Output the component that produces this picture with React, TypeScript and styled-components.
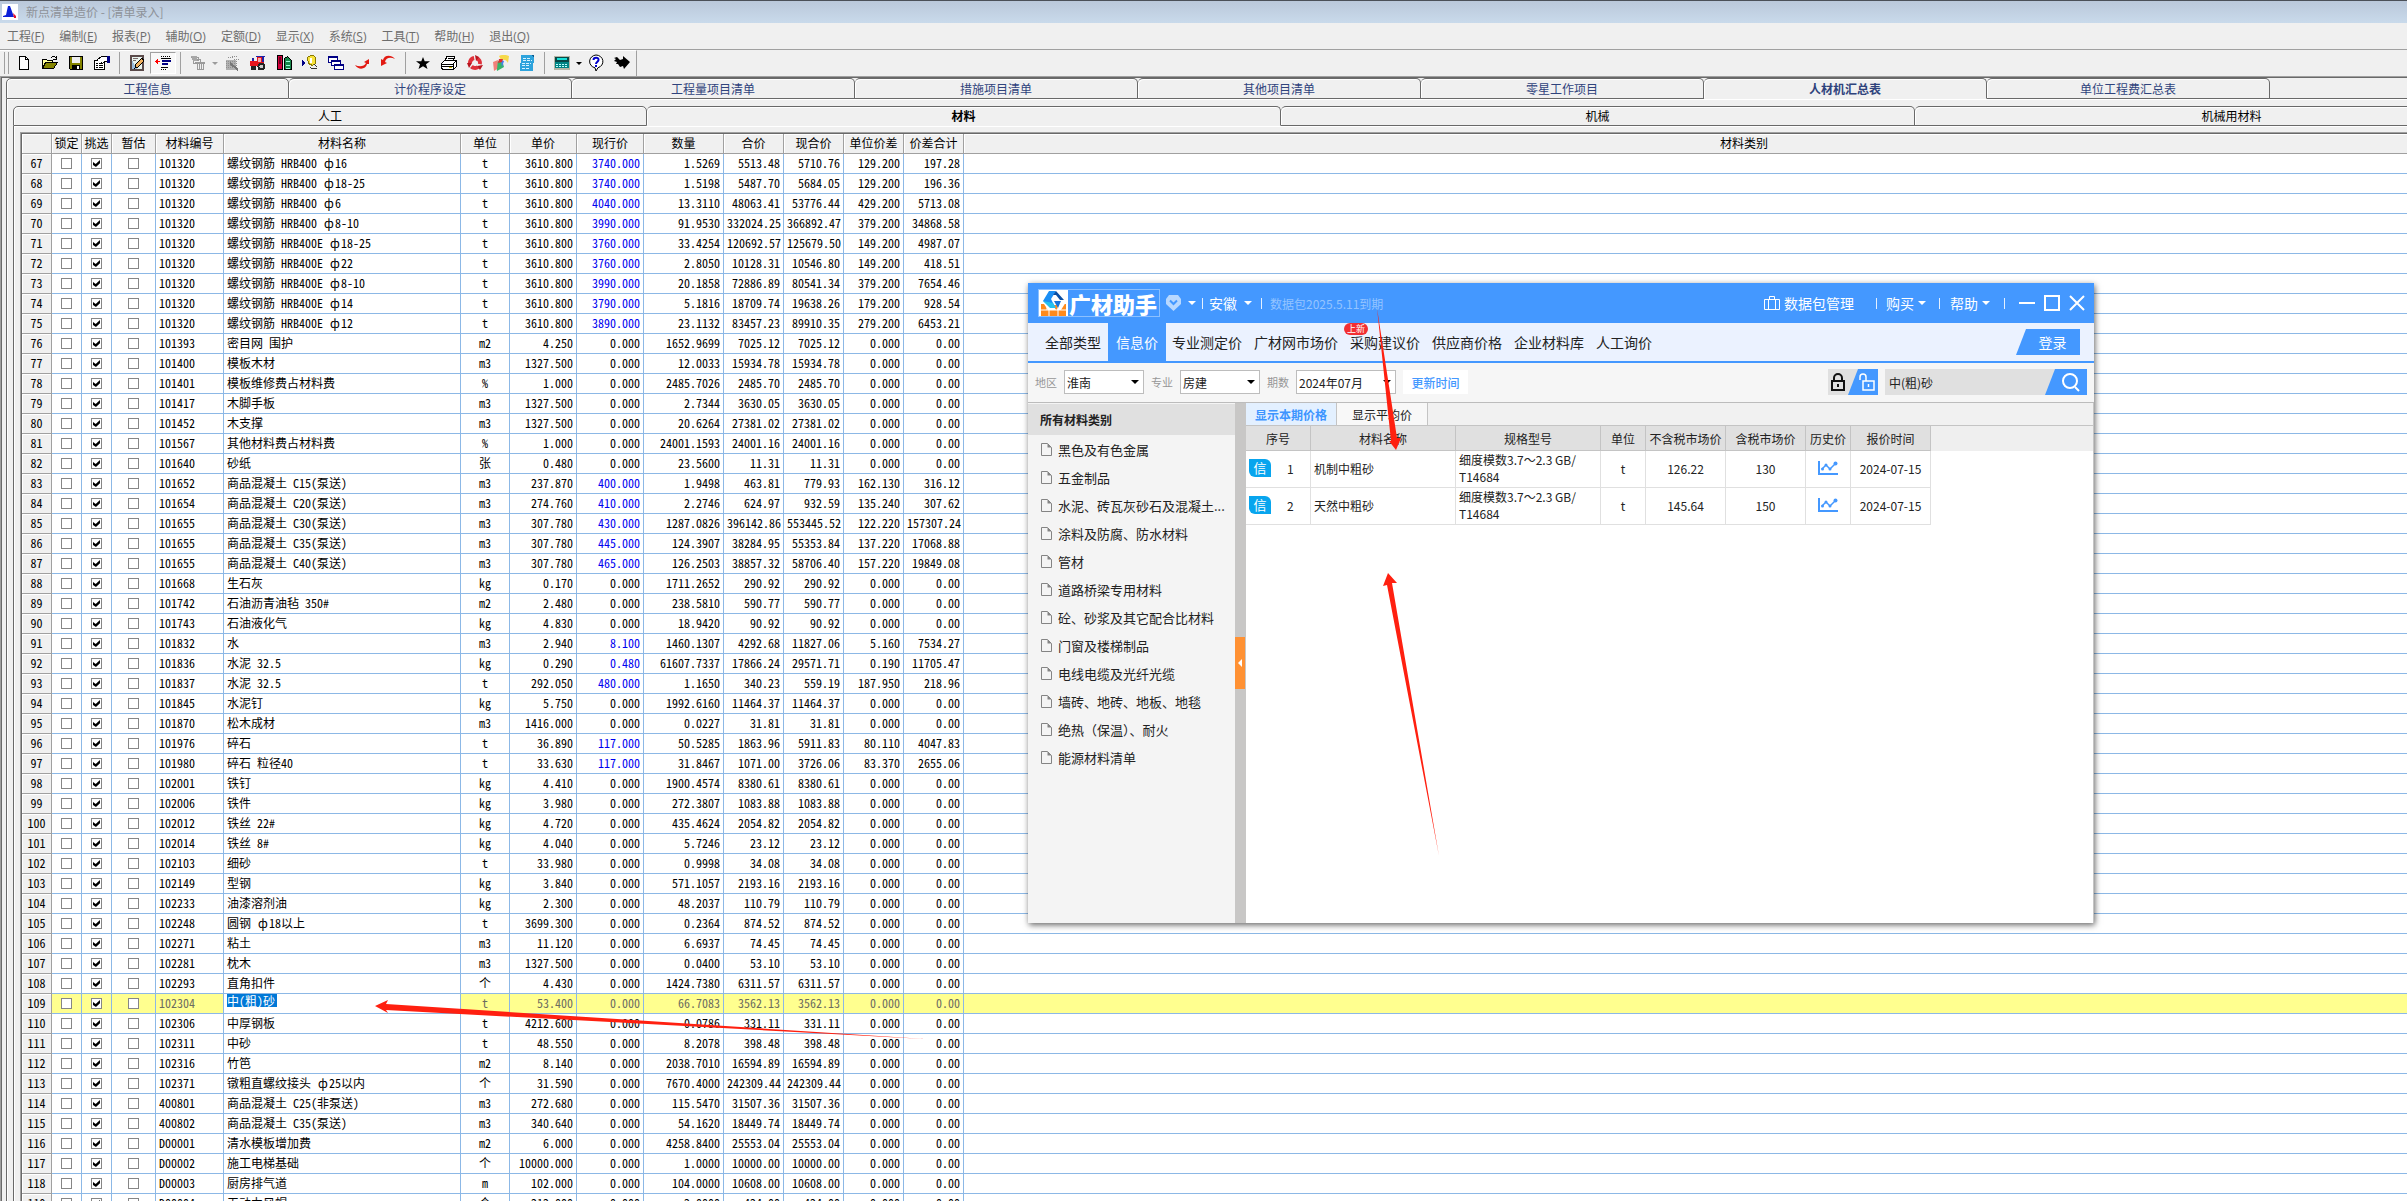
import React from 'react';
import styled, { createGlobalStyle, css } from 'styled-components';

const SONG = `"Noto Sans CJK SC", "Noto Sans", sans-serif`;
const UI = `"Noto Sans CJK SC", "Open Sans", sans-serif`;
const BLUE = '#4498ff';

const Global = createGlobalStyle`
  *, *::before, *::after { box-sizing: border-box; }
  body { margin: 0; background: #f0f0f0; font-family: ${SONG}; font-size: 12px; color: #000; }
  button, input, select { font: inherit; color: inherit; margin: 0; padding: 0; border: 0; border-radius: 0; background: none; outline: none; }
`;

/* ---------- main window ---------- */

const Screen = styled.div`
  position: relative;
  display: flex;
  flex-direction: column;
  width: 100%;
  height: 100vh;
  overflow: hidden;
  background: #f0f0f0;
`;

const TitleBar = styled.header`
  flex: none;
  display: flex;
  align-items: center;
  gap: 8px;
  height: 23px;
  padding-left: 2px;
  border-top: 1px solid #4b5058;
  background: linear-gradient(#bac8da, #c9daeb);
  color: #8e9299;
  line-height: 20px;
`;

const MenuBar = styled.nav`
  flex: none;
  display: flex;
  gap: 15px;
  height: 27px;
  padding: 0 7px;
  border-bottom: 1px solid #a0a0a0;
  button { color: #6d6d6d; padding-top: 2px; line-height: 24px; font-family: "Open Sans", "Noto Sans CJK SC", sans-serif; }
`;

const ToolBar = styled.div`
  flex: none;
  align-self: flex-start;
  display: flex;
  align-items: center;
  height: 26px;
  padding: 0 1px 1px 4px;
  border-right: 1px solid #a0a0a0;
  border-top: 1px solid #fff;
`;

const Grip = styled.span`
  width: 5px;
  height: 22px;
  margin-right: 2px;
  border: solid #a0a0a0;
  border-width: 0 1px;
`;

const ToolButton = styled.button<{ $pressed?: boolean }>`
  display: flex;
  align-items: center;
  justify-content: center;
  width: 26px;
  height: 22px;
  svg { flex: none; }
  ${(p) => p.$pressed && css`
    background: #f8f8f8;
    border: 1px solid;
    border-color: #a0a0a0 #fff #fff #a0a0a0;
  `}
`;

const ToolSep = styled.span`
  width: 1px;
  height: 22px;
  margin: 0 4px;
  background: #a0a0a0;
`;

const Caret = styled.span<{ $color?: string; $w?: number }>`
  flex: none;
  width: 0;
  height: 0;
  border: ${(p) => p.$w ?? 3}px solid transparent;
  border-bottom-width: 0;
  border-top-color: ${(p) => p.$color ?? '#000'};
`;

const ToolCaret = styled.button`
  display: flex;
  align-items: center;
  justify-content: center;
  width: 8px;
  height: 22px;
`;

const Workspace = styled.main`
  flex: 1;
  min-height: 0;
  padding: 1px 0 0 5px;
  border: solid #a0a0a0;
  border-width: 1px 0 0 1px;
  box-shadow: inset 1px 1px 0 #696969;
  overflow: hidden;
`;

const TabStrip = styled.div`
  display: flex;
  height: 21px;
`;

const Tab = styled.button<{ $active?: boolean; $main?: boolean }>`
  flex: none;
  width: ${(p) => (p.$main ? 283 : 634)}px;
  height: ${(p) => (p.$main ? 21 : 20)}px;
  border: 1px solid #696969;
  border-width: 1px 1px 1px 0;
  border-radius: 5px 5px 0 0;
  background: #f0f0f0;
  box-shadow: inset 1px 1px 0 #fff;
  line-height: 18px;
  color: ${(p) => (p.$main ? '#2f437c' : '#000')};
  &:first-child { border-left-width: 1px; }
  ${(p) => p.$active && css`
    font-weight: 700;
    border-bottom-color: #f0f0f0;
  `}
`;

const TabFill = styled.span<{ $main?: boolean }>`
  flex: 1;
  height: ${(p) => (p.$main ? 21 : 20)}px;
  border-bottom: 1px solid #696969;
`;

const Page = styled.section`
  width: max-content;
  min-width: 100%;
  padding: 7px 0 0 6px;
  border-left: 1px solid #696969;
  box-shadow: inset 1px 1px 0 #fff;
`;

const SubPage = styled(Page)`
  padding-top: 6px;
`;

const GridFrame = styled.div`
  border: solid #a0a0a0;
  border-width: 1px 0 0 1px;
`;

const GridInner = styled.div`
  border: solid #696969;
  border-width: 1px 0 0 1px;
`;

const SubStrip = styled(TabStrip)`
  height: 20px;
`;

const Grid = styled.table`
  table-layout: fixed;
  width: 2503px;
  border-collapse: separate;
  border-spacing: 0;
  background: #fff;
  font-feature-settings: "hwid";
  th, td {
    height: 20px;
    padding: 0;
    border: solid #8cb8e6;
    border-width: 0 1px 1px 0;
    font-weight: 400;
    line-height: 17px;
    vertical-align: top;
    white-space: nowrap;
    overflow: hidden;
  }
  th {
    background: #f0f0f0;
    border-color: #a0a0a0;
    box-shadow: inset 1px 1px 0 #fff;
    text-align: center;
  }
`;

const Row = styled.tr<{ $current?: boolean }>`
  ${(p) => p.$current && css`
    td { background: #ffff8f; color: #6c6c60; }
  `}
`;

const Cell = styled.td<{ $kind?: 'num' | 'mid' | 'text'; $blue?: boolean; $editing?: boolean }>`
  && {
    text-align: ${(p) => (p.$kind === 'num' ? 'right' : p.$kind === 'mid' ? 'center' : 'left')};
    padding: 0 3px;
    ${(p) => p.$blue && 'color: #0000f0;'}
    ${(p) => p.$editing && 'background: #fff;'}
  }
`;

const WideGlyph = styled.span`
  display: inline-block;
  width: 12px;
  text-align: center;
`;

const Editor = styled.input`
  display: block;
  width: 50px;
  height: 13px;
  background: #0078d7;
  color: #fff;
  line-height: 13px;
`;

const Check = styled.input`
  appearance: none;
  display: block;
  width: 11px;
  height: 11px;
  margin: 4px auto 0;
  border: 1px solid #868686;
  background: #fff;
  &:checked::after {
    content: '';
    display: block;
    width: 7px;
    height: 7px;
    margin: 1px;
    background: #000;
    clip-path: polygon(0 30%, 38% 58%, 100% 0, 100% 45%, 42% 100%, 0 72%);
  }
`;

/* ---------- price helper window ---------- */

const Helper = styled.section`
  position: absolute;
  left: 1028px;
  top: 283px;
  display: flex;
  flex-direction: column;
  width: 1066px;
  height: 640px;
  background: #fff;
  color: #222;
  font-family: ${UI};
  box-shadow: 1px 2px 6px rgba(0, 0, 0, 0.6);
`;

const HelperTitle = styled.header`
  display: flex;
  align-items: center;
  height: 40px;
  padding: 0 9px 0 10px;
  background: ${BLUE};
  color: #fff;
  font-size: 14px;
`;

const Brand = styled.div`
  display: flex;
  align-items: center;
  width: 122px;
  height: 28px;
  border: 1px solid #8cc0ff;
  font-size: 22px;
  font-weight: 900;
  line-height: 26px;
  white-space: nowrap;
  overflow: hidden;
  svg { flex: none; margin-right: 1px; }
`;

const TitleItem = styled.button<{ $gap?: number; $tight?: boolean }>`
  display: flex;
  align-items: center;
  gap: ${(p) => (p.$tight ? 4 : 7)}px;
  margin-left: ${(p) => p.$gap ?? 6}px;
  line-height: 20px;
  white-space: nowrap;
`;

const TitleSep = styled.span<{ $gap?: number }>`
  width: 1px;
  height: 11px;
  margin-left: ${(p) => p.$gap ?? 8}px;
  background: #e4f0ff;
`;

const Expiry = styled.span`
  margin-left: 8px;
  font-size: 12px;
  color: #94c4ff;
`;

const Push = styled.span`
  flex: 1;
`;

const HelperNav = styled.nav`
  display: flex;
  height: 40px;
  padding: 0 14px 0 11px;
  background: #ebf2ff;
  border-bottom: 2px solid ${BLUE};
  font-size: 14px;
`;

const NavTab = styled.button<{ $active?: boolean }>`
  position: relative;
  height: 38px;
  padding: 0 6px;
  line-height: 36px;
  &:first-child { padding-right: 7px; }
  ${(p) => p.$active && css`
    background: ${BLUE};
    color: #fff;
    padding: 0 8px;
  `}
`;

const Badge = styled.span`
  position: absolute;
  left: 0;
  top: 0;
  width: 24px;
  height: 12px;
  border-radius: 6px;
  background: #f22f33;
  color: #fff;
  font-size: 9px;
  line-height: 12px;
  text-align: center;
`;

const Login = styled.button`
  width: 64px;
  height: 26px;
  margin-top: 6px;
  padding-left: 9px;
  background: ${BLUE};
  color: #fff;
  clip-path: polygon(10px 0, 100% 0, 100% 100%, 0 100%);
`;

const FilterBar = styled.div`
  display: flex;
  align-items: center;
  gap: 7px;
  height: 40px;
  padding: 0 7px 1px;
  background: #f6f6f6;
  border-bottom: 1px solid #bcbcbc;
  label { font-size: 11px; color: #979797; }
`;

const SelectBox = styled.span<{ $w: number }>`
  display: flex;
  align-items: center;
  width: ${(p) => p.$w}px;
  height: 24px;
  padding-right: 4px;
  border: 1px solid #bdbdbd;
  background: #fff;
  select { flex: 1; min-width: 0; height: 22px; padding-left: 2px; appearance: none; }
`;

const Refresh = styled.button`
  width: 65px;
  height: 24px;
  background: #fff;
  color: ${BLUE};
  font-weight: 500;
`;

const LockSwitch = styled.div`
  display: flex;
  width: 50px;
  height: 26px;
  background: #e0e0e0;
  button { display: flex; align-items: center; justify-content: center; width: 20px; }
  button + button { width: 30px; padding-left: 8px; background: ${BLUE}; clip-path: polygon(10px 0, 100% 0, 100% 100%, 0 100%); }
`;

const Search = styled.form`
  display: flex;
  width: 202px;
  height: 26px;
  background: #e0e0e0;
  input { flex: 1; min-width: 0; padding: 0 4px; }
  button { display: flex; align-items: center; justify-content: center; width: 42px; padding-left: 10px; background: ${BLUE}; clip-path: polygon(10px 0, 100% 0, 100% 100%, 0 100%); }
`;

const HelperBody = styled.div`
  flex: 1;
  display: flex;
  min-height: 0;
`;

const Side = styled.aside`
  width: 207px;
  background: #f4f4f4;
  h2 { margin: 1px 0 0; padding-left: 12px; background: #e0e0e0; font-size: 12px; line-height: 31px; }
  ul { margin: 0; padding: 0; list-style: none; }
`;

const Category = styled.button`
  display: flex;
  align-items: center;
  gap: 6px;
  height: 28px;
  padding-left: 13px;
  font-size: 13px;
  white-space: nowrap;
`;

const Divider = styled.div`
  display: flex;
  align-items: center;
  width: 11px;
  background: #c8c7c6;
  button { display: flex; align-items: center; justify-content: center; width: 10px; height: 52px; background: #ff9133; }
`;

const Results = styled.div`
  flex: 1;
  min-width: 0;
  border-right: 1px solid #c4c4c4;
`;

const ResultTabs = styled.div`
  display: flex;
  height: 22px;
  background: #f1f1f1;
`;

const ResultTab = styled.button<{ $active?: boolean }>`
  width: 91px;
  padding-top: 1px;
  border-right: 1px solid #c4c4c4;
  background: ${(p) => (p.$active ? '#e3f0ff' : '#f8f8f8')};
  color: ${(p) => (p.$active ? '#3d95ff' : '#222')};
  font-weight: ${(p) => (p.$active ? 700 : 400)};
  line-height: 21px;
`;

const ResultWrap = styled.div`
  border-top: 1px solid #c4c4c4;
  background: linear-gradient(#efefef 25px, #fff 25px);
`;

const ResultTable = styled.table`
  table-layout: fixed;
  width: 685px;
  border-collapse: separate;
  border-spacing: 0;
  th { height: 25px; padding: 0; border: solid #c4c4c4; border-width: 0 1px 1px 0; background: #e0e0e0; font-weight: 400; line-height: 17px; white-space: nowrap; }
  td { height: 37px; padding: 0 3px 2px; border: solid #e0e0e0; border-width: 0 1px 1px 0; background: #fff; text-align: center; line-height: 17px; }
  td:nth-child(2), td:nth-child(3) { text-align: left; }
`;

const NumberCell = styled.div`
  display: flex;
  align-items: center;
  gap: 16px;
`;

const Tag = styled.span`
  width: 22px;
  height: 18px;
  border-radius: 0 6px 0 6px;
  background: #08a5ee;
  color: #fff;
  line-height: 18px;
  font-size: 13px;
`;

const HistoryLink = styled.button`
  display: block;
  margin: 0 auto;
  height: 16px;
`;

const Arrows = styled.svg`
  position: absolute;
  left: 0;
  top: 0;
  pointer-events: none;
`;

/* ---------- data ---------- */

const MENUS: [string, string][] = [
  ['工程', 'F'], ['编制', 'E'], ['报表', 'P'], ['辅助', 'O'], ['定额', 'D'],
  ['显示', 'X'], ['系统', 'S'], ['工具', 'T'], ['帮助', 'H'], ['退出', 'Q'],
];
const MAIN_TABS = ['工程信息', '计价程序设定', '工程量项目清单', '措施项目清单', '其他项目清单', '零星工作项目', '人材机汇总表', '单位工程费汇总表'];
const SUB_TABS = ['人工', '材料', '机械', '机械用材料'];
const COLUMNS: [string, number][] = [
  ['', 30], ['锁定', 30], ['挑选', 30], ['暂估', 44], ['材料编号', 68], ['材料名称', 237], ['单位', 49], ['单价', 67],
  ['现行价', 67], ['数量', 80], ['合价', 60], ['现合价', 60], ['单位价差', 60], ['价差合计', 60], ['材料类别', 1561],
];

const MATERIALS = `101320|螺纹钢筋 HRB400 ф16|t|3610.800|3740.000|1.5269|5513.48|5710.76|129.200|197.28
101320|螺纹钢筋 HRB400 ф18-25|t|3610.800|3740.000|1.5198|5487.70|5684.05|129.200|196.36
101320|螺纹钢筋 HRB400 ф6|t|3610.800|4040.000|13.3110|48063.41|53776.44|429.200|5713.08
101320|螺纹钢筋 HRB400 ф8-10|t|3610.800|3990.000|91.9530|332024.25|366892.47|379.200|34868.58
101320|螺纹钢筋 HRB400E ф18-25|t|3610.800|3760.000|33.4254|120692.57|125679.50|149.200|4987.07
101320|螺纹钢筋 HRB400E ф22|t|3610.800|3760.000|2.8050|10128.31|10546.80|149.200|418.51
101320|螺纹钢筋 HRB400E ф8-10|t|3610.800|3990.000|20.1858|72886.89|80541.34|379.200|7654.46
101320|螺纹钢筋 HRB400E ф14|t|3610.800|3790.000|5.1816|18709.74|19638.26|179.200|928.54
101320|螺纹钢筋 HRB400E ф12|t|3610.800|3890.000|23.1132|83457.23|89910.35|279.200|6453.21
101393|密目网 围护|m2|4.250|0.000|1652.9699|7025.12|7025.12|0.000|0.00
101400|模板木材|m3|1327.500|0.000|12.0033|15934.78|15934.78|0.000|0.00
101401|模板维修费占材料费|%|1.000|0.000|2485.7026|2485.70|2485.70|0.000|0.00
101417|木脚手板|m3|1327.500|0.000|2.7344|3630.05|3630.05|0.000|0.00
101452|木支撑|m3|1327.500|0.000|20.6264|27381.02|27381.02|0.000|0.00
101567|其他材料费占材料费|%|1.000|0.000|24001.1593|24001.16|24001.16|0.000|0.00
101640|砂纸|张|0.480|0.000|23.5600|11.31|11.31|0.000|0.00
101652|商品混凝土 C15(泵送)|m3|237.870|400.000|1.9498|463.81|779.93|162.130|316.12
101654|商品混凝土 C20(泵送)|m3|274.760|410.000|2.2746|624.97|932.59|135.240|307.62
101655|商品混凝土 C30(泵送)|m3|307.780|430.000|1287.0826|396142.86|553445.52|122.220|157307.24
101655|商品混凝土 C35(泵送)|m3|307.780|445.000|124.3907|38284.95|55353.84|137.220|17068.88
101655|商品混凝土 C40(泵送)|m3|307.780|465.000|126.2503|38857.32|58706.40|157.220|19849.08
101668|生石灰|kg|0.170|0.000|1711.2652|290.92|290.92|0.000|0.00
101742|石油沥青油毡 350#|m2|2.480|0.000|238.5810|590.77|590.77|0.000|0.00
101743|石油液化气|kg|4.830|0.000|18.9420|90.92|90.92|0.000|0.00
101832|水|m3|2.940|8.100|1460.1307|4292.68|11827.06|5.160|7534.27
101836|水泥 32.5|kg|0.290|0.480|61607.7337|17866.24|29571.71|0.190|11705.47
101837|水泥 32.5|t|292.050|480.000|1.1650|340.23|559.19|187.950|218.96
101845|水泥钉|kg|5.750|0.000|1992.6160|11464.37|11464.37|0.000|0.00
101870|松木成材|m3|1416.000|0.000|0.0227|31.81|31.81|0.000|0.00
101976|碎石|t|36.890|117.000|50.5285|1863.96|5911.83|80.110|4047.83
101980|碎石 粒径40|t|33.630|117.000|31.8467|1071.00|3726.06|83.370|2655.06
102001|铁钉|kg|4.410|0.000|1900.4574|8380.61|8380.61|0.000|0.00
102006|铁件|kg|3.980|0.000|272.3807|1083.88|1083.88|0.000|0.00
102012|铁丝 22#|kg|4.720|0.000|435.4624|2054.82|2054.82|0.000|0.00
102014|铁丝 8#|kg|4.040|0.000|5.7246|23.12|23.12|0.000|0.00
102103|细砂|t|33.980|0.000|0.9998|34.08|34.08|0.000|0.00
102149|型钢|kg|3.840|0.000|571.1057|2193.16|2193.16|0.000|0.00
102233|油漆溶剂油|kg|2.300|0.000|48.2037|110.79|110.79|0.000|0.00
102248|圆钢 ф18以上|t|3699.300|0.000|0.2364|874.52|874.52|0.000|0.00
102271|粘土|m3|11.120|0.000|6.6937|74.45|74.45|0.000|0.00
102281|枕木|m3|1327.500|0.000|0.0400|53.10|53.10|0.000|0.00
102293|直角扣件|个|4.430|0.000|1424.7380|6311.57|6311.57|0.000|0.00
102304|中(粗)砂|t|53.400|0.000|66.7083|3562.13|3562.13|0.000|0.00
102306|中厚钢板|t|4212.600|0.000|0.0786|331.11|331.11|0.000|0.00
102311|中砂|t|48.550|0.000|8.2078|398.48|398.48|0.000|0.00
102316|竹笆|m2|8.140|0.000|2038.7010|16594.89|16594.89|0.000|0.00
102371|镦粗直螺纹接头 ф25以内|个|31.590|0.000|7670.4000|242309.44|242309.44|0.000|0.00
400801|商品混凝土 C25(非泵送)|m3|272.680|0.000|115.5470|31507.36|31507.36|0.000|0.00
400802|商品混凝土 C35(泵送)|m3|340.640|0.000|54.1620|18449.74|18449.74|0.000|0.00
D00001|清水模板增加费|m2|6.000|0.000|4258.8400|25553.04|25553.04|0.000|0.00
D00002|施工电梯基础|个|10000.000|0.000|1.0000|10000.00|10000.00|0.000|0.00
D00003|厨房排气道|m|102.000|0.000|104.0000|10608.00|10608.00|0.000|0.00
D00004|无动力风帽|个|212.000|0.000|2.0000|424.00|424.00|0.000|0.00`
  .split('\n')
  .map((line, i) => ({ no: 67 + i, fields: line.split('|') }));

const CURRENT = 109;
const PRICE_FIELD = 4;

const CATEGORIES = ['黑色及有色金属', '五金制品', '水泥、砖瓦灰砂石及混凝土...', '涂料及防腐、防水材料', '管材', '道路桥梁专用材料', '砼、砂浆及其它配合比材料', '门窗及楼梯制品', '电线电缆及光纤光缆', '墙砖、地砖、地板、地毯', '绝热（保温）、耐火', '能源材料清单'];
const RESULT_COLS: [string, number][] = [['序号', 65], ['材料名称', 145], ['规格型号', 145], ['单位', 45], ['不含税市场价', 80], ['含税市场价', 80], ['历史价', 45], ['报价时间', 80]];
const RESULTS = [['机制中粗砂', '126.22', '130'], ['天然中粗砂', '145.64', '150']];

/* ---------- icons ---------- */

const Ic = ({ children }: { children: React.ReactNode }) => (
  <svg width="16" height="16" viewBox="0 0 16 16" fill="none" shapeRendering="crispEdges">{children}</svg>
);

const I = {
  create: <Ic><path d="M3.500 1.500h6l3 3v10h-9z" fill="#fff" stroke="#000" /><path d="M9.500 1.500v3h3" stroke="#000" /></Ic>,
  open: <Ic><path d="M0.500 13.500v-9h4l1 1h5v2" fill="#ffff9a" stroke="#000" /><path d="M0.500 13.500l3-6h12l-4 6z" fill="#848400" stroke="#000" /><path d="M9 3c1-2 4-2 5 0M14 1v3h-3" stroke="#000" /></Ic>,
  save: <Ic><path d="M1.500 1.500h13v13h-12l-1-1z" fill="#848400" stroke="#000" /><path d="M4 2h8v6H4z" fill="#efefef" /><path d="M4 10h8v5H4z" fill="#000" /><path d="M9 11h2v3H9z" fill="#fff" /></Ic>,
  props: <Ic><path d="M0.500 5.500h10v9h-10z" fill="#fff" stroke="#000" /><path d="M2 8.500h2M5 8.500h4M2 10.500h2M5 10.500h4M2 12.500h2M5 12.500h4" stroke="#000" /><path d="M3 5l4-3 6-1 1 5-4 1-2 2-1-2" fill="#fff" stroke="#000" /><path d="M13 1h3v7h-3z" fill="#000084" /></Ic>,
  edit: <Ic><path d="M2 1h12v14H2z" fill="#e8f3ee" stroke="#5a4a4a" strokeWidth="2" /><path d="M3 14V5l5 9z" fill="#9bd" /><path d="M6 13l1-4 6-6 2 3-6 6z" fill="#f0b060" stroke="#000" /><path d="M4 3.500h5M4 5.500h3" stroke="#7a6a6a" /></Ic>,
  indent: <Ic><path d="M6 1.500h9M6 14.500h6" stroke="#000" strokeDasharray="1 1" /><path d="M6 3.500h10" stroke="#000" /><path d="M7 6h9M7 9h6" stroke="#000084" strokeWidth="2" /><path d="M6 12.500h7" stroke="#000" /><path d="M0 6.500h5" stroke="#f00" /><path d="M3 4v5L0 6.500z" fill="#f00" /></Ic>,
  remove: <Ic><g stroke="#9b9b9b"><path d="M1 2h7v3H3v3h3M7 4h3v3M6 7.500h9M7.500 8v6.500h6V8M9.500 9v5M11.500 9v5" /></g><path d="M1 1h6v5H3z" fill="#a8a8a8" /><path d="M5 7h10v2H5z" fill="#9b9b9b" /></Ic>,
  dither: <Ic><path d="M2 5h10v10H2z" fill="#b0b0b0" /><path d="M2 6.500h11M2 8.500h11M2 10.500h11M2 12.500h11M4 2.500h6M8 1.500h6M10 4.500h5" stroke="#8f8f8f" strokeDasharray="1 1" /><path d="M6 8l8 7" stroke="#777" strokeWidth="2" /></Ic>,
  tractor: <Ic><path d="M0 6h7V2h7v6h-1v3H0z" fill="#e8141c" /><path d="M8 3h3v4H8z" fill="#f4b0b0" /><path d="M2 3h2v3H2zM12 2h2v5h-2z" fill="#2121a5" /><path d="M6 1h9v1H6z" fill="#2121a5" /><circle cx="11.500" cy="11.500" r="4" fill="#222" /><circle cx="11.500" cy="11.500" r="2" fill="#ccc" /><circle cx="3.500" cy="13" r="2.500" fill="#222" /></Ic>,
  books: <Ic><path d="M1.500 0.500h5v14h-5z" fill="#d4003c" stroke="#000" /><path d="M3 2h2v7H3z" fill="#700020" /><path d="M8.500 3.500l3-2 4 4v9h-7z" fill="#18864a" stroke="#000" /><path d="M10 6l4 1M10 10l4 1M10 13h4" stroke="#9fd" /></Ic>,
  data: <Ic><path d="M0 5l4 3-4 3z" fill="#000084" /><path d="M5.500 2.500l3-2h3l2 2v6l-3 2-4-2z" fill="#f7e23c" stroke="#8a7a00" /><path d="M9 3v5" stroke="#fff" strokeWidth="2" /><path d="M8 12c2 3 5 0 7 2M12 9l3 3" stroke="#333" /></Ic>,
  windows: <Ic><g fill="#fff" stroke="#000084"><path d="M0.500 1.500h9v6h-9z" /><path d="M3.500 5.500h9v5h-9z" /><path d="M6.500 9.500h9v5h-9z" /></g><path d="M0 2h10M3 6h10M6 10h10" stroke="#000084" strokeWidth="2" /></Ic>,
  redo: <svg width="16" height="16" viewBox="0 0 16 16"><path d="M1 10c4 6 11 4 12-1h2V4l-5 3 2 1c-2 4-7 4-11 2z" fill="#e21a12" /></svg>,
  undo: <svg width="16" height="16" viewBox="0 0 16 16"><path d="M15 4C11-1 4 0 3 5L1 4v7l6-3-2-1c1-5 6-5 10-3z" fill="#e21a12" /></svg>,
  star: <svg width="16" height="16" viewBox="0 0 16 16"><path d="M8 2l1.700 4.200H15l-4 3.100 1.500 4.700L8 11.200 3.500 14 5 9.300 1 6.200h5.300z" /></svg>,
  print: <Ic><path d="M4 6l2-5h8l-2 5" fill="#fff" stroke="#000" /><path d="M7 3.500h5M6 5.500h5" stroke="#000" /><path d="M0.500 8.500l3-3h12v6l-3 3h-11l-1-2z" fill="#fff" stroke="#000" /><path d="M1 9h11l3-3M1 11.500h11M12.500 9v5" stroke="#000" /><path d="M8 12.500h3" stroke="#d8c800" /></Ic>,
  recycle: <svg width="16" height="16" viewBox="0 0 16 16"><circle cx="8" cy="8" r="5" fill="none" stroke="#e0303a" strokeWidth="4" strokeDasharray="7 3.500" transform="rotate(-70 8 8)" /><path d="M8 0l4 2-3 4zM0 8h5l-3 5zM16 10l-6 1 3 4z" fill="#b8141e" /></svg>,
  palette: <svg width="16" height="16" viewBox="0 0 16 16"><path d="M6 1c4-2 8-1 10 0l-1 7c-1-3-4-4-7-3z" fill="#f6d94a" /><path d="M3 7l6-2 2 7-7 4z" fill="#36b46a" /><path d="M0 7l5-2-1 9-3 2z" fill="#f0807a" /><path d="M8 5l3 1-2 6z" fill="#4a7cf0" /><path d="M6 4l4 0-1 3-4 1z" fill="#e03030" /></svg>,
  doc: <Ic><path d="M2 0h13l-1 16H1z" fill="#2ea3dc" /><path d="M4 3.500h8M4 5.500h9M3 8.500h9M3 10.500h8M3 13.500h8" stroke="#d9f3ff" strokeDasharray="3 1" /><path d="M12 0h3v3z" fill="#0b5a8e" /></Ic>,
  calc: <Ic><path d="M0 1h16v14H0z" fill="#b5b5a5" /><path d="M1 2h14v5H1z" fill="#084848" /><path d="M3 3h10v2H3z" fill="#18e0d8" /><path d="M1 7h14v6H1z" fill="#008484" /><path d="M2 9.500h12M2 11.500h12" stroke="#bff" strokeDasharray="2 1" /></Ic>,
  help: <svg width="18" height="18" viewBox="0 0 18 18"><path d="M9 1a7 6.500 0 0 1 2 12.700L9 17l-1-3.200A7 6.500 0 0 1 9 1z" fill="#fff" stroke="#000" /><path d="M6.500 6c0-3 5.500-3 5 0 0 1.500-2.500 2-2.500 4M9 11v2" stroke="#00c" strokeWidth="2" fill="none" /></svg>,
  hand: <svg width="18" height="16" viewBox="0 0 18 16"><path d="M1 3l3-1 3 3 3-1V1l7 6-6 7-1-3-3 1-2-3-2 0 1-2-3-1 2-2z" /></svg>,
};

const BrandMark = () => (
  <svg width="29" height="28" viewBox="0 0 29 28">
    <path d="M0 0h29v28H0z" fill="#fff" />
    <path d="M2 15h25v12H2z" fill="#ff8a1c" />
    <path d="M2 21h25M10 21v6M19 21v6M8 15v6" stroke="#fff" />
    <path d="M3 12L10 1h8l9 12-5 8h-4l1-5h-5l3 5H9z" fill="#fff" />
    <path d="M10 2h7l-5 8 4 8h-5L4 12z" fill="#1b8ff5" />
    <path d="M4 12l7 7h6l-3-5z" fill="#24c2f0" />
    <path d="M14 6l3-4 8 9h-4l-4-5z" fill="#0a4ea3" />
    <path d="M15 12h7l-3 7z" fill="#1672d8" />
  </svg>
);

const FileIcon = () => (
  <svg width="11" height="13" viewBox="0 0 11 13" fill="none"><path d="M0.500 0.500h6l4 4v8h-10z" stroke="#848484" /><path d="M6.500 0.500v4h4z" fill="#848484" /></svg>
);

const ChartIcon = () => (
  <svg width="20" height="16" viewBox="0 0 20 16" fill="none" stroke={BLUE}>
    <path d="M1 1v13h19" strokeWidth="2" /><path d="M4 9l4-4 4 4 5-5" strokeWidth="1.500" />
    <g fill={BLUE} stroke="none"><circle cx="4.500" cy="9" r="1.500" /><circle cx="8" cy="5" r="1.500" /><circle cx="12" cy="9" r="1.500" /><circle cx="17.500" cy="3.500" r="2" /></g>
  </svg>
);

const Padlock = ({ open }: { open?: boolean }) => (
  <svg width="16" height="18" viewBox="0 0 16 18" fill="none" stroke={open ? '#fff' : '#111'} strokeWidth={open ? 1.5 : 2}>
    {open ? <path d="M1 7V4a3 3 0 0 1 6 0v4M4 8h11v9H4zM9.500 11v3" /> : <path d="M4 7V5a4 4 0 0 1 8 0v2M2 8h12v9H2zM8 11v3" />}
  </svg>
);

const Tools = ({ items }: { items: [keyof typeof I, string, boolean?][] }) => (
  <>{items.map(([k, label, pressed]) => <ToolButton key={k} aria-label={label} $pressed={pressed}>{I[k]}</ToolButton>)}</>
);

/* ---------- views ---------- */

const FieldText = ({ value }: { value: string }) => {
  const [before, after] = value.split('ф');
  return after === undefined ? <>{value}</> : <>{before}<WideGlyph>ф</WideGlyph>{after}</>;
};

const MaterialGrid = () => (
  <Grid>
    <colgroup>{COLUMNS.map(([n, w]) => <col key={n} style={{ width: w }} />)}</colgroup>
    <thead><tr>{COLUMNS.map(([n]) => <th key={n}>{n}</th>)}</tr></thead>
    <tbody>
      {MATERIALS.map(({ no, fields }) => (
        <Row key={no} $current={no === CURRENT}>
          <th scope="row">{no}</th>
          <Cell><Check type="checkbox" aria-label={`锁定 ${no}`} /></Cell>
          <Cell><Check type="checkbox" aria-label={`挑选 ${no}`} defaultChecked /></Cell>
          <Cell><Check type="checkbox" aria-label={`暂估 ${no}`} /></Cell>
          {fields.map((v, i) => {
            const editing = no === CURRENT && i === 1;
            return (
              <Cell key={i} $kind={i < 2 ? 'text' : i === 2 ? 'mid' : 'num'} $blue={i === PRICE_FIELD && v !== '0.000'} $editing={editing}>
                {editing ? <Editor aria-label="材料名称" defaultValue={v} /> : <FieldText value={v} />}
              </Cell>
            );
          })}
          <Cell />
        </Row>
      ))}
    </tbody>
  </Grid>
);

const Select = ({ id, label, value, w }: { id: string; label: string; value: string; w: number }) => (
  <>
    <label htmlFor={id}>{label}</label>
    <SelectBox $w={w}>
      <select id={id} defaultValue={value}><option>{value}</option></select>
      <Caret $w={4} />
    </SelectBox>
  </>
);

const PriceHelper = () => (
  <Helper>
    <HelperTitle>
      <Brand><BrandMark />广材助手</Brand>
      <TitleItem $gap={6} aria-label="会员">
        <svg width="15" height="16" viewBox="0 0 15 16"><path d="M3 0h9l3 4v5l-7.500 7L0 9V4z" fill="#b8d8ff" /><path d="M4 5.500L7.500 9 11 5.500" fill="none" stroke={BLUE} strokeWidth="2" /></svg>
        <Caret $color="#fff" $w={4} />
      </TitleItem>
      <TitleSep $gap={6} />
      <TitleItem>安徽<Caret $color="#fff" $w={4} /></TitleItem>
      <TitleSep $gap={9} />
      <Expiry>数据包2025.5.11到期</Expiry>
      <Push />
      <TitleItem $tight>
        <svg width="16" height="16" viewBox="0 0 16 16" fill="none" stroke="#fff"><path d="M0.500 4.500h15v10h-15zM5.500 4V1.500h5V4M4.500 5v10M11.500 5v10" /></svg>
        <span>数据包管理</span>
      </TitleItem>
      <TitleSep $gap={22} />
      <TitleItem $gap={9} $tight>购买<Caret $color="#fff" $w={4} /></TitleItem>
      <TitleSep $gap={13} />
      <TitleItem $gap={10} $tight>帮助<Caret $color="#fff" $w={4} /></TitleItem>
      <TitleSep $gap={14} />
      <TitleItem $gap={14} aria-label="最小化"><svg width="16" height="16"><path d="M0 8h16" stroke="#fff" strokeWidth="2" /></svg></TitleItem>
      <TitleItem $gap={9} aria-label="最大化"><svg width="16" height="16"><path d="M1 1h14v14H1z" fill="none" stroke="#fff" strokeWidth="2" /></svg></TitleItem>
      <TitleItem $gap={9} aria-label="关闭"><svg width="16" height="16"><path d="M1 1l14 14M15 1L1 15" stroke="#fff" strokeWidth="2" /></svg></TitleItem>
    </HelperTitle>
    <HelperNav>
      <NavTab>全部类型</NavTab>
      <NavTab $active>信息价</NavTab>
      <NavTab>专业测定价</NavTab>
      <NavTab>广材网市场价</NavTab>
      <NavTab>采购建议价<Badge>上新</Badge></NavTab>
      <NavTab>供应商价格</NavTab>
      <NavTab>企业材料库</NavTab>
      <NavTab>人工询价</NavTab>
      <Push />
      <Login>登录</Login>
    </HelperNav>
    <FilterBar>
      <Select id="area" label="地区" value="淮南" w={80} />
      <Select id="major" label="专业" value="房建" w={80} />
      <Select id="period" label="期数" value="2024年07月" w={100} />
      <Refresh>更新时间</Refresh>
      <Push />
      <LockSwitch>
        <button aria-label="锁定"><Padlock /></button>
        <button aria-label="解锁"><Padlock open /></button>
      </LockSwitch>
      <Search onSubmit={(e) => e.preventDefault()}>
        <input aria-label="搜索材料" defaultValue="中(粗)砂" />
        <button aria-label="搜索"><svg width="20" height="20" viewBox="0 0 20 20" fill="none" stroke="#fff" strokeWidth="2"><circle cx="9" cy="9" r="7" /><path d="M14 15l4 4" /></svg></button>
      </Search>
    </FilterBar>
    <HelperBody>
      <Side>
        <h2>所有材料类别</h2>
        <ul>{CATEGORIES.map((c) => <li key={c}><Category><FileIcon />{c}</Category></li>)}</ul>
      </Side>
      <Divider><button aria-label="收起"><svg width="4" height="8"><path d="M4 0v8L0 4z" fill="#fff" /></svg></button></Divider>
      <Results>
        <ResultTabs>
          <ResultTab $active>显示本期价格</ResultTab>
          <ResultTab>显示平均价</ResultTab>
        </ResultTabs>
        <ResultWrap>
          <ResultTable>
            <colgroup>{RESULT_COLS.map(([n, w]) => <col key={n} style={{ width: w }} />)}</colgroup>
            <thead><tr>{RESULT_COLS.map(([n]) => <th key={n}>{n}</th>)}</tr></thead>
            <tbody>
              {RESULTS.map(([name, net, gross], i) => (
                <tr key={name}>
                  <td><NumberCell><Tag>信</Tag>{i + 1}</NumberCell></td>
                  <td>{name}</td>
                  <td>细度模数3.7～2.3 GB/<br />T14684</td>
                  <td>t</td>
                  <td>{net}</td>
                  <td>{gross}</td>
                  <td><HistoryLink aria-label="历史价"><ChartIcon /></HistoryLink></td>
                  <td>2024-07-15</td>
                </tr>
              ))}
            </tbody>
          </ResultTable>
        </ResultWrap>
      </Results>
    </HelperBody>
  </Helper>
);

export default function App() {
  return (
    <Screen>
      <Global />
      <TitleBar>
        <svg width="16" height="16" viewBox="0 0 16 16"><path d="M0 0h16v16H0z" fill="#fff" /><path d="M6 2h2l4 11H1v-1l3-1z" fill="#0b1fd8" /><path d="M11 9l3 3v2h-2z" fill="#e01030" /></svg>
        <span>新点清单造价 - [清单录入]</span>
      </TitleBar>
      <MenuBar>{MENUS.map(([n, k]) => <button key={k}>{n}(<u>{k}</u>)</button>)}</MenuBar>
      <ToolBar>
        <Grip />
        <Tools items={[['create', '新建'], ['open', '打开'], ['save', '保存'], ['props', '属性']]} />
        <ToolSep />
        <Tools items={[['edit', '编辑'], ['indent', '缩进', true]]} />
        <ToolSep />
        <Tools items={[['remove', '删除']]} />
        <ToolCaret aria-label="删除选项"><Caret $color="#9b9b9b" /></ToolCaret>
        <Tools items={[['dither', '清除'], ['tractor', '机械'], ['books', '定额'], ['data', '数据'], ['windows', '窗口'], ['redo', '下移'], ['undo', '撤销']]} />
        <ToolSep />
        <Tools items={[['star', '收藏'], ['print', '打印'], ['recycle', '刷新'], ['palette', '颜色'], ['doc', '文档']]} />
        <ToolSep />
        <Tools items={[['calc', '计算器']]} />
        <ToolCaret aria-label="计算器选项"><Caret /></ToolCaret>
        <Tools items={[['help', '帮助'], ['hand', '退出']]} />
      </ToolBar>
      <Workspace>
        <TabStrip>
          {MAIN_TABS.map((t, i) => <Tab key={t} $main $active={i === 6}>{t}</Tab>)}
          <TabFill $main />
        </TabStrip>
        <Page>
          <SubStrip>
            {SUB_TABS.map((t, i) => <Tab key={t} $active={i === 1}>{t}</Tab>)}
          </SubStrip>
          <SubPage as="div">
            <GridFrame><GridInner><MaterialGrid /></GridInner></GridFrame>
          </SubPage>
        </Page>
      </Workspace>
      <PriceHelper />
      <Arrows width="1500" height="1100" viewBox="0 0 1500 1100" aria-hidden="true">
        <g fill="#ff2010">
          <path d="M1377 308L1391 441L1389 441L1396 450L1401 438L1397 438Z" />
          <path d="M1439 856L1387 585L1383 586L1388 573L1397 583L1392 583Z" />
          <path d="M925 1039L386 1010L388 1013L375 1006L388 1000L386 1004Z" />
        </g>
      </Arrows>
    </Screen>
  );
}
